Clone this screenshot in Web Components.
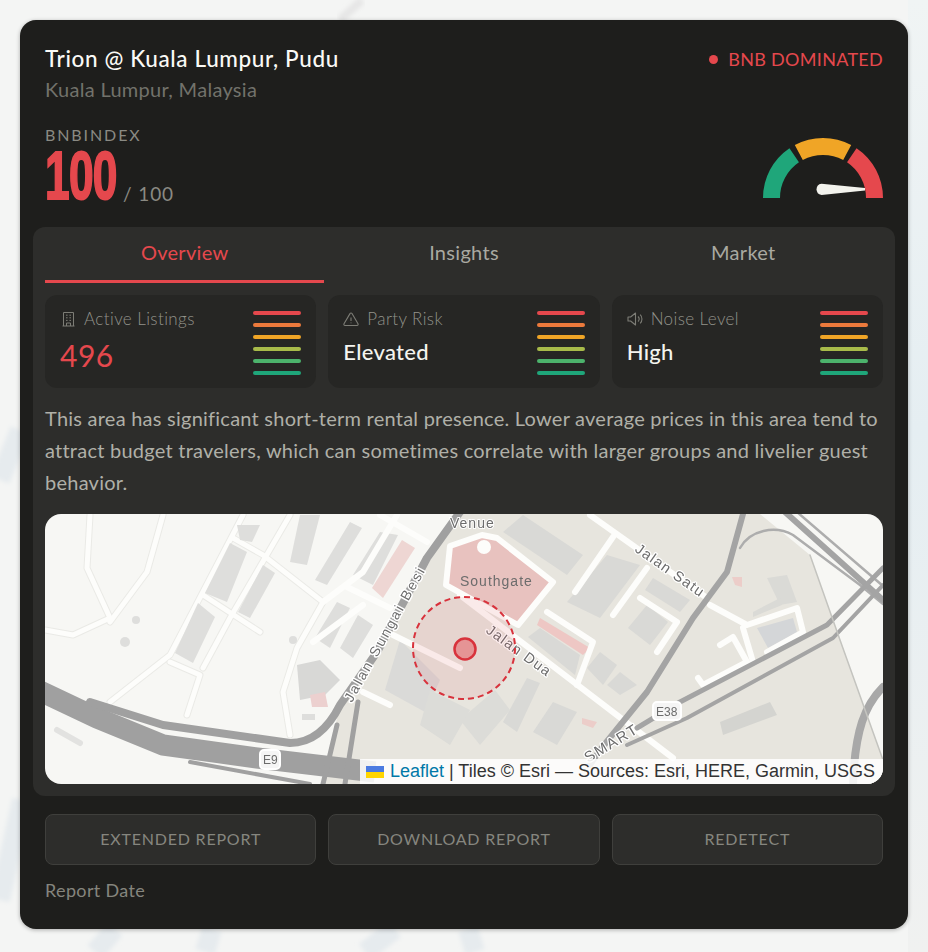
<!DOCTYPE html>
<html lang="en">
<head>
<meta charset="UTF-8">
<title>BnbIndex report</title>
<style>
    html,body{margin:0;height:952px;overflow:hidden;background:#f1f3f3;}
    body{font-family:"Lato","Noto Sans",sans-serif;}
</style>
</head>
<body>
<report-page>
    <report-card></report-card>
</report-page>

<template id="pageTpl">
    <style>
        :host{display:block;position:relative;width:928px;height:952px;overflow:hidden;padding:20px;box-sizing:border-box;}
        svg{position:absolute;left:0;top:0;}
        ::slotted(*){position:relative;}
    </style>
    <svg width="928" height="952" viewBox="0 0 928 952" fill="none">
        <defs>
            <linearGradient id="side" x1="0" y1="0" x2="0" y2="1">
                <stop offset="0" stop-color="#f0f4f4"/>
                <stop offset=".45" stop-color="#e5eef2"/>
                <stop offset="1" stop-color="#f0f1f0"/>
            </linearGradient>
            <filter id="soft"><feGaussianBlur stdDeviation="2"/></filter>
        </defs>
        <rect width="928" height="952" fill="#f4f5f4"/>
        <rect x="908" y="0" width="20" height="952" fill="url(#side)"/>
        <g stroke="#e6ebee" stroke-width="20" filter="url(#soft)">
            <path d="M0 480 L20 430"/>
            <path d="M0 900 L22 800"/>
            <path d="M95 952 L115 929"/>
            <path d="M205 952 L212 929"/>
            <path d="M365 952 L395 929"/>
            <path d="M475 952 L468 929"/>
        </g>
        <path d="M340 20 L362 0" stroke="#e6e6e6" stroke-width="8" filter="url(#soft)"/>
    </svg>
    <slot></slot>
</template>

<template id="cardTpl">
    <style>
        :host{display:block;width:888px;height:909px;box-sizing:border-box;background:#1e1e1c;border-radius:16px;padding:0 13px;box-shadow:0 1px 4px rgba(0,0,0,.3);color:#f4f4ef;}
        header{display:flex;justify-content:space-between;align-items:flex-start;padding:25px 12px 0;height:207px;box-sizing:border-box;}
        h1{margin:0;font-size:22.5px;line-height:28px;font-weight:500;color:#fafaf6;letter-spacing:.62px;}
        .city{font-size:20px;line-height:28px;color:#72726b;margin-top:2px;font-weight:400;letter-spacing:.3px;}
        .label{font-size:16px;line-height:20px;letter-spacing:1.9px;color:#8a8a83;margin-top:22px;}
        .score{display:flex;align-items:flex-end;height:60px;}
        .num{font-family:"Liberation Sans",sans-serif;font-weight:700;font-size:68px;line-height:60px;color:#e5484d;transform:scaleX(.65);transform-origin:left center;width:72px;letter-spacing:-1px;-webkit-text-stroke:2px #e5484d;}
        .of{font-size:19px;color:#8a8a83;line-height:22px;margin-left:6px;font-weight:400;letter-spacing:.9px;}
        .right{display:flex;flex-direction:column;align-items:flex-end;justify-content:space-between;height:153px;}
        .status{display:flex;align-items:center;gap:10px;color:#e5484d;font-size:18px;line-height:28px;letter-spacing:.3px;padding-bottom:2px;}
        .status i{width:9px;height:9px;border-radius:50%;background:#e5484d;}
        .panel{background:#2d2d2b;border-radius:12px;padding:0 12px;height:569px;box-sizing:border-box;display:flex;flex-direction:column;}
        nav{display:grid;grid-template-columns:repeat(3,1fr);height:56px;}
        nav span{display:flex;align-items:center;justify-content:center;font-size:20px;color:#a9a9a1;padding-bottom:6px;box-sizing:border-box;letter-spacing:.3px;}
        nav .on{color:#e5484d;border-bottom:3px solid #e5484d;padding-bottom:3px;}
        .stats{display:grid;grid-template-columns:repeat(3,1fr);gap:12px;margin-top:12px;}
        p{margin:14px 0 16px;font-size:20px;line-height:32px;color:#b0b0a8;letter-spacing:.24px;font-weight:400;}
        .actions{display:grid;grid-template-columns:repeat(3,1fr);gap:12px;padding:18px 12px 0;}
        .date{padding:13px 12px 0;font-size:18px;line-height:24px;color:#85857e;letter-spacing:.35px;}
    </style>
    <header>
        <div>
            <h1>Trion @ Kuala Lumpur, Pudu</h1>
            <div class="city">Kuala Lumpur, Malaysia</div>
            <div class="label">BNBINDEX</div>
            <div class="score"><span class="num">100</span><span class="of">/ 100</span></div>
        </div>
        <div class="right">
            <div class="status"><i></i>BNB DOMINATED</div>
            <score-gauge></score-gauge>
        </div>
    </header>
    <section class="panel">
        <nav><span class="on">Overview</span><span>Insights</span><span>Market</span></nav>
        <div class="stats">
            <stat-card label="Active Listings" value="496" tone="red">
                <svg slot="icon" viewBox="0 0 16 16" width="16" height="16" fill="none" stroke="currentColor" stroke-width="1"><path d="M3.5 15V1.5h10V15M2.5 15h12"/><path d="M6 4.2h1.6M9.4 4.2H11M6 6.8h1.6M9.4 6.8H11M6 9.4h1.6M9.4 9.4H11M6.5 15v-3h4v3"/></svg>
            </stat-card>
            <stat-card label="Party Risk" value="Elevated">
                <svg slot="icon" viewBox="0 0 16 16" width="16" height="16" fill="none" stroke="currentColor" stroke-width="1.1" stroke-linejoin="round"><path d="M7 2.6a1.15 1.15 0 0 1 2 0l6 10.2a1.15 1.15 0 0 1-1 1.7H2a1.15 1.15 0 0 1-1-1.7z"/><path d="M8 6.5v3.5M8 11.6v.7"/></svg>
            </stat-card>
            <stat-card label="Noise Level" value="High">
                <svg slot="icon" viewBox="0 0 16 16" width="16" height="16" fill="none" stroke="currentColor" stroke-width="1.1" stroke-linejoin="round"><path d="M1 6h2.6L8.5 2v12L3.6 10H1z"/><path d="M11 5.5a3.6 3.6 0 0 1 0 5M13.2 3.6a6.4 6.4 0 0 1 0 8.8"/></svg>
            </stat-card>
        </div>
        <p>This area has significant short-term rental presence. Lower average prices in this area tend to attract budget travelers, which can sometimes correlate with larger groups and livelier guest behavior.</p>
        <area-map></area-map>
    </section>
    <div class="actions">
        <report-button>EXTENDED REPORT</report-button>
        <report-button>DOWNLOAD REPORT</report-button>
        <report-button>REDETECT</report-button>
    </div>
    <div class="date">Report Date</div>
</template>

<template id="gaugeTpl">
    <style>
        :host{display:block;width:120px;height:62px;}
        svg{display:block;}
    </style>
    <svg width="120" height="62" viewBox="763 136 120 62" fill="none">
        <g stroke-width="17">
            <path d="M771.5 198 A51.5 51.5 0 0 1 794.2 155.3" stroke="#1fa67a"/>
            <path d="M798.8 152.5 A51.5 51.5 0 0 1 847.2 152.5" stroke="#f0a526"/>
            <path d="M851.8 155.3 A51.5 51.5 0 0 1 874.5 198" stroke="#e5484d"/>
        </g>
        <path d="M821.5 183.7 L865 188 V190.4 L821.5 195 A5.7 5.7 0 0 1 821.5 183.7Z" fill="#f2f2ec"/>
    </svg>
</template>

<template id="statTpl">
    <style>
        :host{display:flex;justify-content:space-between;height:93px;box-sizing:border-box;background:#262624;border-radius:12px;padding:13px 15px 0 15px;}
        .head{display:flex;align-items:center;gap:8px;color:#7d7d76;font-size:17px;line-height:22px;font-weight:300;letter-spacing:.4px;}
        .head span{color:#92928a;}
        .val{font-size:22px;line-height:32px;margin-top:6px;font-weight:500;color:#f4f4ef;letter-spacing:.3px;}
        .val.red{color:#e5484d;font-size:30px;font-weight:400;margin-top:9px;letter-spacing:.5px;}
        ul{list-style:none;margin:3px 0 0;padding:0;width:48px;display:flex;flex-direction:column;gap:8px;}
        li{height:4px;border-radius:2px;}
        ::slotted(svg){flex:none;}
    </style>
    <div>
        <div class="head"><slot name="icon"></slot><span id="label"></span></div>
        <div class="val" id="val"></div>
    </div>
    <ul>
        <li style="background:#e5484d"></li>
        <li style="background:#ec7a3c"></li>
        <li style="background:#f0a526"></li>
        <li style="background:#a8bb4a"></li>
        <li style="background:#4cb36c"></li>
        <li style="background:#1fa67a"></li>
    </ul>
</template>

<template id="buttonTpl">
    <style>
        :host{display:flex;align-items:center;justify-content:center;height:51px;box-sizing:border-box;background:#2d2d2b;border:1px solid #3f3f3c;border-radius:8px;color:#86867f;font-size:16px;letter-spacing:.8px;padding-bottom:2px;}
    </style>
    <slot></slot>
</template>

<template id="mapTpl">
    <style>
        :host{display:block;position:relative;height:270px;border-radius:16px;overflow:hidden;background:#f7f7f4;}
        svg.map{display:block;filter:blur(.45px);}
        text{font-family:"Liberation Sans",sans-serif;font-size:14px;fill:#6c6c6c;stroke:#fff;stroke-width:2.5px;paint-order:stroke;letter-spacing:.6px;}
        .attr{position:absolute;right:0;bottom:0;height:25px;display:flex;align-items:center;box-sizing:border-box;padding:0 8px 0 6px;background:rgba(255,255,255,.85);font-family:"Liberation Sans",sans-serif;font-size:18px;color:#333;white-space:pre;}
        .attr b{font-weight:400;color:#0078a8;}
        .attr svg{margin-right:6px;}
    </style>
    <svg class="map" width="838" height="270" viewBox="45 514 838 270" fill="none" stroke-linecap="round" stroke-linejoin="round">
        <!-- land -->
        <path d="M457 514 L377 652 L340 705 L322 784 H883 V760 L810 555 L760 514Z" fill="#e7e5de"/>
        <!-- left white roads, faint casing first -->
        <g>
            <g stroke="#eaeae6" stroke-width="7">
                <path d="M90 515 L87 568 L110 618 L73 635 L45 630"/>
                <path d="M163 515 L147 572 L110 622"/>
                <path d="M243 515 L170 655 L110 702"/>
                <path d="M170 662 L200 675 L187 715"/>
                <path d="M290 515 L230 618 L203 668"/>
                <path d="M233 538 L263 555 L323 602 L297 648 L283 692 L290 735"/>
                <path d="M203 595 L260 632"/>
            </g>
            <g stroke="#fdfdfb" stroke-width="5">
                <path d="M90 515 L87 568 L110 618 L73 635 L45 630"/>
                <path d="M163 515 L147 572 L110 622"/>
                <path d="M243 515 L170 655 L110 702"/>
                <path d="M170 662 L200 675 L187 715"/>
                <path d="M290 515 L230 618 L203 668"/>
                <path d="M233 538 L263 555 L323 602 L297 648 L283 692 L290 735"/>
                <path d="M203 595 L260 632"/>
            </g>
        </g>
        <!-- left side buildings -->
        <g fill="#dededc">
            <path d="M237 525 L260 525 L252 542 L240 540Z"/>
            <path d="M230 543 L247 552 L227 602 L205 593Z"/>
            <path d="M263 565 L275 573 L250 618 L238 612Z"/>
            <path d="M198 603 L215 617 L193 663 L175 653Z"/>
            <path d="M300 515 L320 515 L307 565 L290 562Z"/>
            <path d="M350 522 L362 528 L327 585 L315 580Z"/>
            <path d="M380 532 L398 535 L373 585 L353 575Z"/>
            <path d="M337 602 L350 608 L330 648 L315 638Z"/>
            <path d="M358 615 L373 625 L353 658 L340 648Z"/>
            <path d="M297 665 L320 660 L340 680 L325 695 L300 700Z" fill="#d8d8d6"/>
            <circle cx="136" cy="620" r="4"/><circle cx="125" cy="642" r="5"/><circle cx="293" cy="640" r="4"/>
            <rect x="302" y="714" width="13" height="6"/>
        </g>
        <path d="M57 730 L80 743" stroke="#e2e2e0" stroke-width="6"/>
        <path d="M402 540 L415 548 L383 598 L372 588Z" fill="#eed6d3"/>
        <path d="M310 695 L325 692 L328 707 L312 707Z" fill="#ecd0cf"/>
        <!-- white roads at the junction -->
        <g stroke="#fdfdfb" stroke-width="6">
            <path d="M380 515 L427 542"/>
            <path d="M323 602 L363 572 L397 515"/>
            <path d="M347 587 L390 608"/>
            <path d="M313 642 L363 605"/>
            <path d="M363 692 L390 705"/>
        </g>
        <!-- centre buildings -->
        <g fill="#d9d9d6">
            <path d="M503 532 L523 515 L583 555 L567 575Z"/>
            <path d="M567 602 L607 555 L640 565 L600 618Z"/>
            <path d="M653 578 L690 600 L680 612 L645 590Z"/>
            <path d="M628 628 L647 605 L668 622 L650 645Z"/>
            <path d="M528 637 L540 628 L580 655 L575 675Z"/>
            <path d="M587 668 L600 652 L617 665 L603 685Z"/>
            <path d="M607 685 L620 672 L637 685 L620 695Z"/>
            <path d="M503 722 L527 678 L540 683 L517 732Z"/>
            <path d="M533 732 L553 702 L577 712 L557 745Z"/>
            <path d="M460 720 L495 690 L510 710 L480 745Z" fill="#dcdcd8"/>
            <path d="M400 640 L440 680 L425 712 L385 690Z" fill="#dadad8"/>
            <path d="M430 690 L470 710 L450 745 L420 725Z" fill="#dcdcd8"/>
            <path d="M720 722 L770 702 L777 715 L723 735Z" fill="#d4d4d0"/>
            <path d="M757 628 L793 618 L797 632 L768 648Z" fill="#d4d6d8"/>
            <path d="M767 578 L787 575 L797 602 L780 605Z" fill="#dadad6"/>
            <path d="M753 612 L780 598 L782 605 L753 617Z" fill="#dadad6"/>
        </g>
        <path d="M732 577 L742 577 L742 587 L735 585Z" fill="#eccdc9"/>
        <path d="M582 718 L597 722 L593 728 L582 724Z" fill="#eccdc9"/>
        <path d="M540 618 L590 648 L583 655 L537 625Z" fill="#eec7c4"/>
        <!-- southgate -->
        <path d="M450 546 L482 535 L497 538 L553 582 L518 625 L446 585Z" fill="#e8c2bf" stroke="#fdfdfb" stroke-width="6"/>
        <circle cx="484" cy="547" r="7" fill="#fdfdfb"/>
        <!-- beige area white roads -->
        <g stroke="#fdfdfb" stroke-width="6">
            <path d="M590 515 L707 598"/>
            <path d="M613 537 L575 592"/>
            <path d="M460 595 L673 758"/>
            <path d="M547 612 L593 642 L577 685"/>
            <path d="M647 568 L613 615"/>
            <path d="M640 598 L677 622 L657 652"/>
            <path d="M710 605 L747 625 L797 608 L803 632 L767 652"/>
            <path d="M743 628 L753 662"/>
            <path d="M720 645 L733 637 L747 662 L703 685 L698 678"/>
            <path d="M393 635 L460 668"/>
        </g>
        <!-- grey roads -->
        <g stroke="#a0a0a0">
            <path d="M40 691 L97 718 L163 745 L257 758 L375 772" stroke-width="21" stroke-linecap="butt"/>
            <path d="M90 702 L163 725 L290 743 C315 743 330 725 340 705 L377 652 L427 558 L460 512" stroke-width="8"/>
            <path d="M190 762 L310 784" stroke-width="4"/>
            <path d="M337 725 L323 784" stroke-width="5"/>
            <path d="M358 702 L345 784" stroke-width="5"/>
            <path d="M743 514 L727 572 L693 618 L647 692 L600 750 L590 765" stroke-width="6" stroke="#a4a4a4"/>
            <path d="M740 548 C750 530 775 525 793 535 L860 585 L883 604" stroke-width="2.5" stroke="#adadad"/>
            <path d="M785 512 L883 600" stroke-width="6" stroke="#a4a4a4"/>
            <path d="M797 512 L883 586" stroke-width="2.5" stroke="#adadad"/>
            <path d="M637 728 L680 702 L827 625 L883 568" stroke-width="5" stroke="#a4a4a4"/>
            <path d="M627 745 L687 718 L833 638 L883 585" stroke-width="4" stroke="#a4a4a4"/>
            <path d="M883 687 C865 705 855 730 853 784" stroke-width="8" stroke="#a8a8a8"/>
            <path d="M810 555 L840 640 L883 760" stroke-width="1.5" stroke="#c4c4bf"/>
        </g>
        <!-- shields -->
        <g>
            <rect x="260" y="750" width="20" height="19" rx="4" fill="#f5f5f5" stroke="#fff" stroke-width="2"/>
            <rect x="653" y="702" width="28" height="18" rx="4" fill="#f5f5f5" stroke="#fff" stroke-width="2"/>
        </g>
        <!-- labels -->
        <text x="263" y="764" style="font-size:12px;stroke:none;letter-spacing:0">E9</text>
        <text x="656" y="716" style="font-size:12px;stroke:none;letter-spacing:0">E38</text>
        <text x="450" y="528" style="stroke-width:2;letter-spacing:1px">Venue</text>
        <text x="460" y="586" style="stroke:none;letter-spacing:1px">Southgate</text>
        <text transform="translate(352,703) rotate(-61)" style="letter-spacing:2.4px;font-size:14px;stroke-width:3px">Jalan Sungai Besi</text>
        <text transform="translate(634,551) rotate(35)" style="letter-spacing:1.3px;font-size:14.5px">Jalan Satu</text>
        <text transform="translate(485,632) rotate(36)" style="letter-spacing:1.3px;font-size:14.5px">Jalan Dua</text>
        <text transform="translate(588,763) rotate(-31)" style="letter-spacing:1.6px;font-size:15px">SMART</text>
        <!-- radius -->
        <circle cx="464" cy="648" r="51" fill="#e5484d" fill-opacity=".1" stroke="#d8323c" stroke-width="2" stroke-dasharray="6 4" stroke-linecap="butt"/>
        <circle cx="465" cy="649" r="10.5" fill="#e5484d" fill-opacity=".45" stroke="#d8323c" stroke-width="2.5"/>
    </svg>
    <div class="attr"><svg width="18" height="12" viewBox="0 0 12 8"><rect width="12" height="4" fill="#4c7be1"/><rect y="4" width="12" height="4" fill="#ffd500"/></svg><b>Leaflet</b> | Tiles © Esri — Sources: Esri, HERE, Garmin, USGS</div>
</template>

<script>
    function fromTemplate(el,id){
        const shadow = el.attachShadow({mode:'open'});
        shadow.appendChild(document.getElementById(id).content.cloneNode(true));
        return shadow;
    }
    class ReportPage extends HTMLElement{
        constructor(){ super(); fromTemplate(this,'pageTpl'); }
    }
    class ReportCard extends HTMLElement{
        constructor(){ super(); fromTemplate(this,'cardTpl'); }
    }
    class ScoreGauge extends HTMLElement{
        constructor(){ super(); fromTemplate(this,'gaugeTpl'); }
    }
    class StatCard extends HTMLElement{
        constructor(){ super(); fromTemplate(this,'statTpl'); }
        connectedCallback(){
            this.shadowRoot.getElementById('label').textContent = this.getAttribute('label');
            const val = this.shadowRoot.getElementById('val');
            val.textContent = this.getAttribute('value');
            if(this.getAttribute('tone')==='red') val.classList.add('red');
        }
    }
    class ReportButton extends HTMLElement{
        constructor(){ super(); fromTemplate(this,'buttonTpl'); }
    }
    class AreaMap extends HTMLElement{
        constructor(){ super(); fromTemplate(this,'mapTpl'); }
    }
    customElements.define('score-gauge',ScoreGauge);
    customElements.define('stat-card',StatCard);
    customElements.define('report-button',ReportButton);
    customElements.define('area-map',AreaMap);
    customElements.define('report-card',ReportCard);
    customElements.define('report-page',ReportPage);
</script>
</body>
</html>
